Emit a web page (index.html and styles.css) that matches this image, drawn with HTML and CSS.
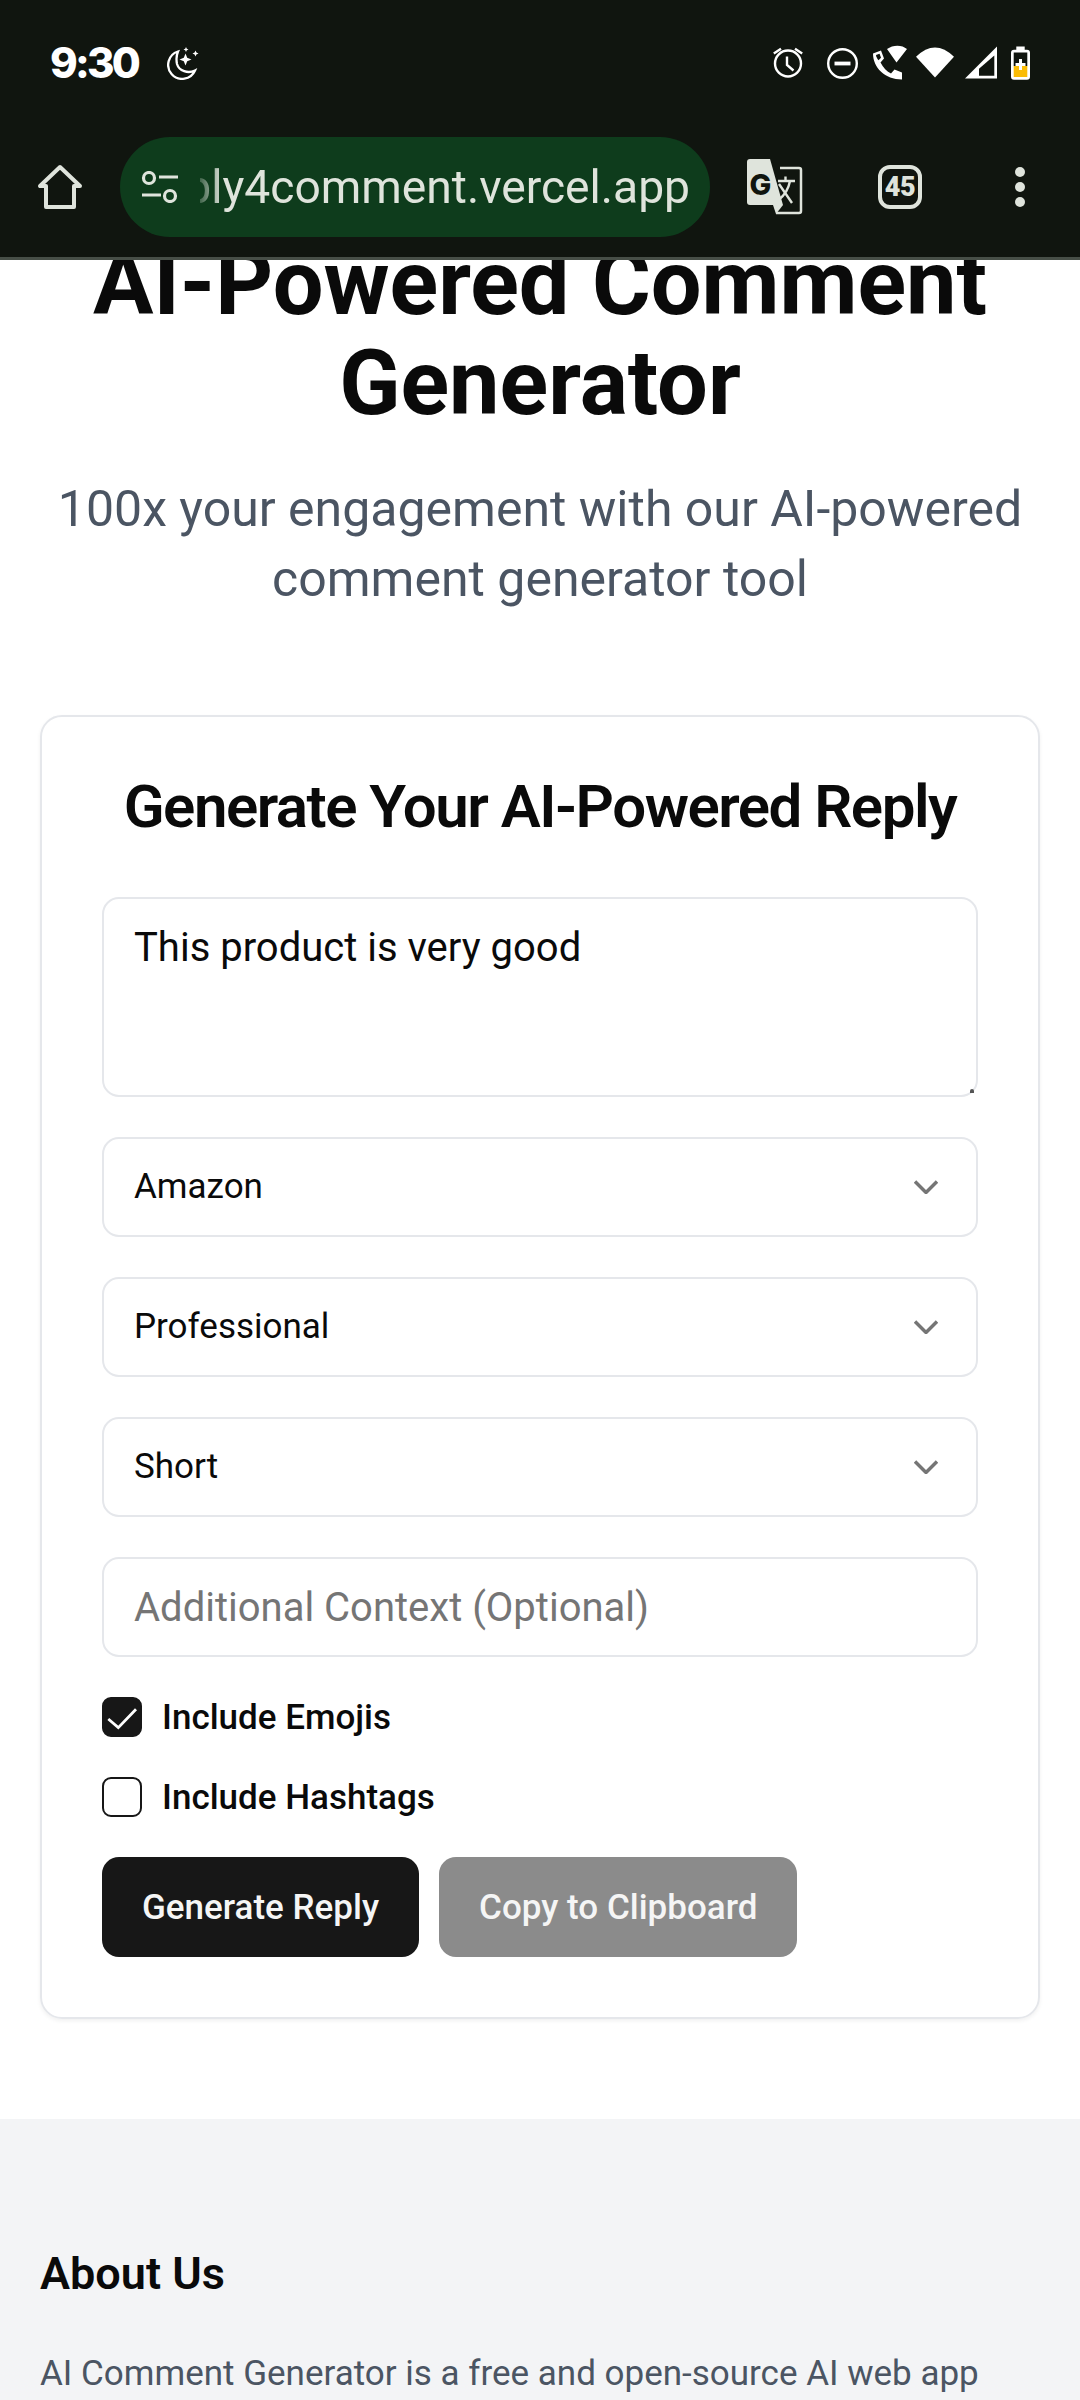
FILE: index.html
```html
<!DOCTYPE html>
<html lang="en">
<head>
<meta charset="utf-8">
<title>AI-Powered Comment Generator</title>
<link rel="stylesheet" href="styles.css">
</head>
<body>
<header class="chrome">
  <div class="status">
    <span class="time">9:30</span>
    <svg class="moon" width="32" height="33" viewBox="0 0 32 33" fill="none"><path stroke="#fff" stroke-width="2.3" d="M11 4.500A14 14 0 1 0 28 23.500C21 27 12 24 10 17c-1-5-.5-9 1-12.500z"/><path fill="#fff" d="M18.500 6.500l1.700 4.300 4.300 1.700-4.300 1.700-1.700 4.300-1.700-4.300-4.300-1.700 4.300-1.700zM28.500 3.500l.9 2.100 2.100.9-2.100.9-.9 2.100-.9-2.100-2.100-.9 2.100-.9zM19 0l.8 1.700 1.700.8-1.700.8-.8 1.700-.8-1.700-1.700-.8 1.700-.8z"/></svg>
    <span class="spacer"></span>
    <svg width="54" height="34" viewBox="0 0 54 34" fill="none" stroke="#fff" stroke-width="2.400"><circle cx="15" cy="17.500" r="13"/><path d="M14 10.500V19L20.500 24.500M.8 7.500L8 2.800M29.200 7.500L22 2.800"/></svg>
    <svg width="46" height="34" viewBox="0 0 46 34" fill="none" stroke="#fff" stroke-width="2.400"><circle cx="15.500" cy="17.500" r="14.300"/><path d="M7.500 17.500h16" stroke-width="3.800"/></svg>
    <svg width="43" height="36" viewBox="0 0 43 36" fill="#fff"><path d="M14 4C20-.5 29-.5 34 4L23.500 17.500zM0 8.500L8 5.500l3 8-3.500 4c2.500 5 6.500 9 10.500 11l3.500-4 7.500 3V34.500C12 34.500 0 22.500 0 8.500z"/><path fill="#10150f" d="M3 10l3.500-1.300 1.500 4-2.500 2.500C4 13.500 3.200 11.500 3 10z"/></svg>
    <svg width="49" height="34" viewBox="0 0 49 34" fill="#fff"><path d="M0 10.800Q19-7.800 38 10.800L19 31.500z"/></svg>
    <svg width="46" height="34" viewBox="0 0 46 34"><path fill="#fff" d="M0 32.500L32 .5v32z"/><path fill="#10150f" d="M29.300 9.500L14 22.800v7h15.300z"/></svg>
    <svg width="19" height="34" viewBox="0 0 19 34"><path fill="#fff" d="M5.300.5h8.400V3.800H16a3 3 0 0 1 3 3v24a3 3 0 0 1-3 3H3a3 3 0 0 1-3-3v-24a3 3 0 0 1 3-3h2.300z"/><path fill="#10150f" d="M2.700 6.500h13.600V20H2.700z"/><path fill="#fbbc04" d="M2.700 20h13.600v11H2.700z"/><path fill="#fff" d="M8 13v4H4.500v3H8v4h3v-4h3.500v-3H11v-4z"/></svg>
  </div>
  <div class="toolbar">
    <svg class="home" width="46" height="46" viewBox="0 0 46 46" fill="none" stroke="#dfe4dc" stroke-width="4" stroke-linejoin="round"><path d="M9 43h28V22h6L23 3 3 22h6z"/></svg>
    <div class="pill">
      <svg class="tune" width="38" height="32" viewBox="0 0 38 32" fill="none" stroke="#dfe4dc" stroke-width="3.200"><circle cx="8" cy="7" r="5.500"/><path d="M18 6h19M1 24h19"/><circle cx="29" cy="25" r="5.500"/></svg>
      <div class="url"><span>reply4comment.vercel.app</span></div>
    </div>
    <svg class="translate" width="56" height="56" viewBox="0 0 56 56"><path d="M33 9H52a2 2 0 0 1 2 2V52a2 2 0 0 1-2 2H29" fill="none" stroke="#dfe4dc" stroke-width="2.500"/><path d="M3 0H23L36 46H3a3 3 0 0 1-3-3V3a3 3 0 0 1 3-3z" fill="#dfe4dc"/><path d="M26 46l3 9 7-9z" fill="#dfe4dc"/><path d="M31 22H48M38.500 17.500V22M45 44L32 25M31.500 41C38 36 41.500 30 43 22" fill="none" stroke="#dfe4dc" stroke-width="2.400"/><text x="2.500" y="36" class="g">G</text></svg>
    <div class="tabs">45</div>
    <div class="dots"><i></i><i></i><i></i></div>
  </div>
</header>
<main class="page">
  <section class="hero">
    <h1>AI-Powered Comment Generator</h1>
    <p>100x your engagement with our AI-powered comment generator tool</p>
  </section>
  <section class="card">
    <h2>Generate Your AI-Powered Reply</h2>
    <form class="form">
      <div class="area"><textarea class="field ta">This product is very good</textarea><i class="grip"></i></div>
      <div class="sel"><div class="field">Amazon</div><svg class="chev" width="24" height="14" viewBox="0 0 24 14" fill="none" stroke="#757575" stroke-width="3.500"><path d="M1 1.500l11 11 11-11"/></svg></div>
      <div class="sel"><div class="field">Professional</div><svg class="chev" width="24" height="14" viewBox="0 0 24 14" fill="none" stroke="#757575" stroke-width="3.500"><path d="M1 1.500l11 11 11-11"/></svg></div>
      <div class="sel"><div class="field">Short</div><svg class="chev" width="24" height="14" viewBox="0 0 24 14" fill="none" stroke="#757575" stroke-width="3.500"><path d="M1 1.500l11 11 11-11"/></svg></div>
      <input class="field ctx" type="text" placeholder="Additional Context (Optional)">
      <div class="checks">
        <label class="check"><span class="box on"><svg class="tick" width="40" height="40" viewBox="0 0 40 40" fill="none" stroke="#fff" stroke-width="2.800"><path d="M6.300 22l10 8.600L34 12.300"/></svg></span>Include Emojis</label>
        <label class="check"><span class="box"></span>Include Hashtags</label>
      </div>
      <div class="actions">
        <button type="button" class="btn dark">Generate Reply</button>
        <button type="button" class="btn gray">Copy to Clipboard</button>
      </div>
    </form>
  </section>
  <section class="about">
    <h3>About Us</h3>
    <p>AI Comment Generator is a free and open-source AI web app</p>
  </section>
</main>
</body>
</html>
```
FILE: styles.css
```css
* { box-sizing: border-box; }
html, body { margin: 0; padding: 0; height: 2400px; overflow: hidden; background: #fff; }
body { font-family: Roboto, "Liberation Sans", sans-serif; color: #0a0a0a; }

.chrome { background: #10150f; height: 260px; border-bottom: 3px solid #474f47; position: relative; z-index: 2; }
.status { display: flex; align-items: center; height: 128px; padding: 0 50px 3px 50px; }
.time { font: 800 42px/48px Inter, Roboto, sans-serif; color: #fff; letter-spacing: -2.800px; width: 117px; }
.moon { margin-top: 1px; }
.spacer { flex: 1; }
.toolbar { display: flex; align-items: center; height: 100px; margin-top: 9px; padding-left: 37px; }
.home { margin-right: 37px; }
.pill { flex: none; width: 590px; height: 100px; border-radius: 50px; background: #0e3c1c; display: flex; align-items: center; padding-left: 21px; padding-right: 20px; }
.tune { flex: none; margin-right: 21px; }
.url { flex: 1; min-width: 0; overflow: hidden; display: flex; justify-content: flex-end; -webkit-mask-image: linear-gradient(90deg, rgba(0,0,0,.25) 0, #000 22px); mask-image: linear-gradient(90deg, rgba(0,0,0,.25) 0, #000 22px); }
.url span { flex: none; font: 450 46.200px/60px Roboto, sans-serif; color: #dfe4dc; white-space: nowrap; }
.translate { flex: none; margin-left: 37px; }
.g { font: 800 29px Inter, Roboto, sans-serif; fill: #10150f; }
.tabs { flex: none; width: 44px; height: 44px; margin-left: 75px; border: 4px solid #dfe4dc; border-radius: 12px; color: #dfe4dc; font: 900 27px/36px Roboto, sans-serif; letter-spacing: -.5px; text-align: center; }
.dots { flex: none; display: flex; flex-direction: column; gap: 5px; margin-left: 93px; }
.dots i { display: block; width: 10px; height: 10px; border-radius: 50%; background: #dfe4dc; }

.page { margin-top: -26px; }
.hero { text-align: center; padding: 0 40px 101px; }
.hero h1 { margin: 0; font-weight: 700; font-size: 90px; line-height: 100px; }
.hero p { margin: 40px 0 0; font-size: 50px; line-height: 70px; color: #4b5563; }

.card { margin: 0 40px; border: 2px solid #e5e7eb; border-radius: 22px; padding: 57px 60px 60px; box-shadow: 0 2px 4px rgba(0,0,0,.06); }
.card h2 { margin: 0; font-weight: 600; font-size: 60px; line-height: 66px; letter-spacing: -1.500px; text-align: center; }
.form { display: flex; flex-direction: column; gap: 40px; margin-top: 57px; }
.field { display: block; width: 100%; height: 100px; border: 2px solid #e5e7eb; border-radius: 17px; background: #fff; padding: 0 30px; font: 400 35px/96px Roboto, sans-serif; color: #0a0a0a; outline: none; }
.field::placeholder { color: #757575; opacity: 1; }
.ctx { font-size: 40px; }
.ta { height: 200px; font-size: 40px; line-height: 48px; padding-top: 25px; resize: none; overflow: hidden; }
.area, .sel { position: relative; }
.grip { position: absolute; right: 4px; bottom: 4px; width: 4px; height: 4px; background: #555; border-radius: 50% 50% 0 0; }
.chev { position: absolute; right: 40px; top: 43px; }
.checks { display: flex; flex-direction: column; gap: 40px; }
.check { display: flex; align-items: center; gap: 20px; height: 40px; font-weight: 500; font-size: 35px; }
.box { flex: none; width: 40px; height: 40px; border: 2px solid #171717; border-radius: 9px; display: flex; align-items: center; justify-content: center; }
.box.on { background: #171717; }
.tick { flex: none; }
.actions { display: flex; gap: 20px; }
.btn { height: 100px; border: 0; border-radius: 17px; padding: 0 40px; font: 500 35px Roboto, sans-serif; color: #f5f5f5; }
.dark { background: #171717; }
.gray { background: #8b8b8b; }

.about { margin-top: 100px; background: #f3f4f6; padding: 129px 40px 0; height: 400px; }
.about h3 { margin: 0; font-weight: 600; font-size: 45px; line-height: 52px; }
.about p { margin: 48px 0 0; font-size: 35px; line-height: 52px; color: #4b5563; white-space: nowrap; }
```
